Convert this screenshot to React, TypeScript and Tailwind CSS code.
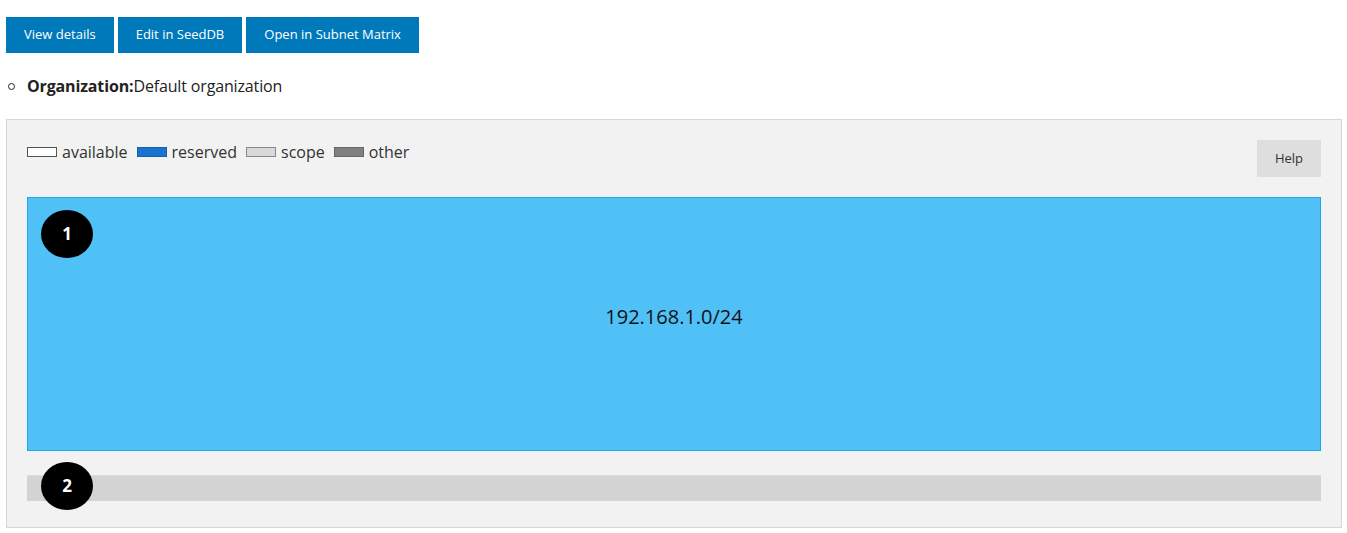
import React from "react";

const legend = [
  { label: "available", swatch: "bg-white border-[#555]" },
  { label: "reserved", swatch: "bg-[#1a73cf] border-[#1a5fa8]" },
  { label: "scope", swatch: "bg-[#d9d9d9] border-[#888]" },
  { label: "other", swatch: "bg-[#808080] border-[#666]" },
];

function Marker({ n }: { n: number }) {
  return (
    <div className="flex h-[48px] w-[52px] items-center justify-center rounded-[50%] bg-black text-[17px] font-bold text-white">
      {n}
    </div>
  );
}

export default function App() {
  return (
    <div className="min-h-[533px] bg-white pl-[6px] pr-[5px] pt-[17px] text-[#222] [font-family:'Open_Sans',sans-serif]">
      {/* Actions */}
      <div className="flex gap-[4px]">
        {["View details", "Edit in SeedDB", "Open in Subnet Matrix"].map((t) => (
          <button
            key={t}
            className="h-[36px] bg-[#0079ba] px-[18px] text-[13px] text-white"
          >
            {t}
          </button>
        ))}
      </div>

      {/* Info */}
      <div className="mt-[21px] flex h-[24px] items-center text-[16px] tracking-[-0.15px]">
        <span className="ml-[2px] mr-[12px] h-[7px] w-[7px] rounded-full border border-[#222]" />
        <span className="font-bold">Organization:</span>
        <span>Default organization</span>
      </div>

      {/* Subnet panel */}
      <div className="mt-[21px] border border-[#d6d6d6] bg-[#f2f2f2] px-[20px] pb-[26px] pt-[20px]">
        <div className="flex items-start justify-between">
          <div className="flex items-center gap-[9px] text-[16px] text-[#333]">
            {legend.map((l) => (
              <div key={l.label} className="flex items-center gap-[5px]">
                <span className={`h-[10px] w-[30px] border ${l.swatch}`} />
                <span>{l.label}</span>
              </div>
            ))}
          </div>
          <button className="h-[37px] w-[64px] bg-[#dedede] text-[13px] text-[#333]">
            Help
          </button>
        </div>

        <div className="relative mt-[20px] flex h-[254px] items-center justify-center border border-[#1ea6e6] bg-[#4fc1f7] pb-[14px] text-[20px] text-[#111]">
          192.168.1.0/24
          <div className="absolute left-[13px] top-[12px]">
            <Marker n={1} />
          </div>
        </div>

        <div className="relative mt-[24px] h-[26px] border-t border-[#dcdcdc] bg-[#d3d3d3]">
          <div className="absolute left-[14px] top-[-14px]">
            <Marker n={2} />
          </div>
        </div>
      </div>
    </div>
  );
}
